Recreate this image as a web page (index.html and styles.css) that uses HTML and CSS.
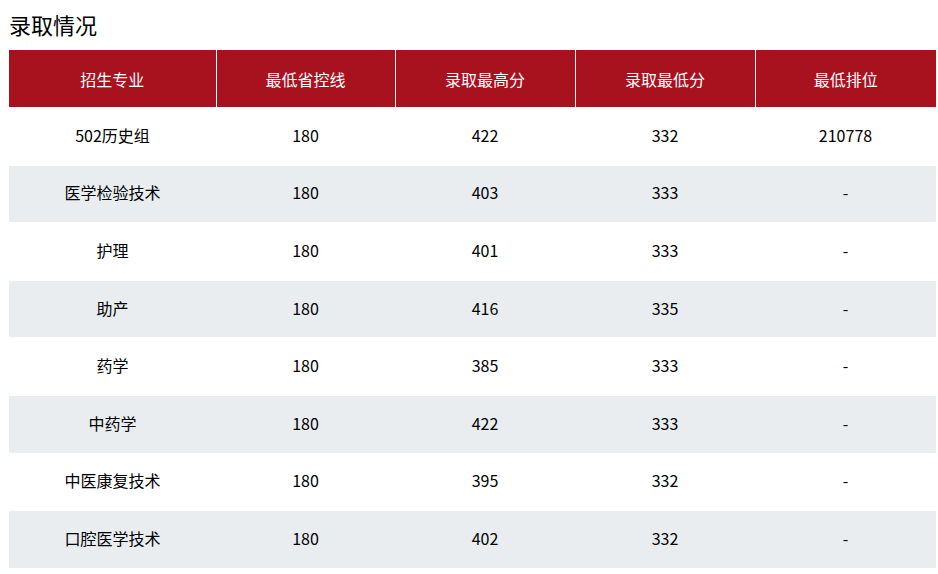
FILE: index.html
```html
<!DOCTYPE html>
<html lang="zh">
<head>
<meta charset="utf-8">
<link rel="stylesheet" href="styles.css">
</head>
<body>
<div class="page">
  <h2 class="title">录取情况</h2>
  <table class="score">
    <colgroup>
      <col class="c1"><col class="c2"><col class="c3"><col class="c4"><col class="c5">
    </colgroup>
    <thead>
      <tr><th>招生专业</th><th>最低省控线</th><th>录取最高分</th><th>录取最低分</th><th>最低排位</th></tr>
    </thead>
    <tbody>
      <tr><td>502历史组</td><td>180</td><td>422</td><td>332</td><td>210778</td></tr>
      <tr><td>医学检验技术</td><td>180</td><td>403</td><td>333</td><td>-</td></tr>
      <tr><td>护理</td><td>180</td><td>401</td><td>333</td><td>-</td></tr>
      <tr><td>助产</td><td>180</td><td>416</td><td>335</td><td>-</td></tr>
      <tr><td>药学</td><td>180</td><td>385</td><td>333</td><td>-</td></tr>
      <tr><td>中药学</td><td>180</td><td>422</td><td>333</td><td>-</td></tr>
      <tr><td>中医康复技术</td><td>180</td><td>395</td><td>332</td><td>-</td></tr>
      <tr><td>口腔医学技术</td><td>180</td><td>402</td><td>332</td><td>-</td></tr>
    </tbody>
  </table>
</div>
</body>
</html>
```
FILE: styles.css
```css
html, body {
  margin: 0;
  padding: 0;
  background: #fff;
}
.page {
  padding: 0 0 0 9px;
  font-family: "Noto Sans CJK SC", "Noto Sans", sans-serif;
  color: #000;
}
.title {
  margin: 0;
  height: 50px;
  font-size: 22px;
  font-weight: normal;
  line-height: 48px;
}
.score {
  width: 927px;
  border-collapse: collapse;
  table-layout: fixed;
  font-size: 16px;
}
.c1 { width: 207px; }
.c2 { width: 179px; }
.c3 { width: 180px; }
.c4 { width: 180px; }
.c5 { width: 181px; }
.score th {
  background: #a8121f;
  color: #fff;
  font-weight: normal;
  height: 57px;
  padding: 0;
  border-left: 1px solid #fff;
  text-align: center;
}
.score th:first-child { border-left: none; }
.score td {
  height: 57.6px;
  padding: 0 0 3px;
  text-align: center;
  border-top: 1px solid #fff;
  box-sizing: border-box;
}
.score tbody tr:nth-child(even) td {
  background: #eaedf0;
}
```
